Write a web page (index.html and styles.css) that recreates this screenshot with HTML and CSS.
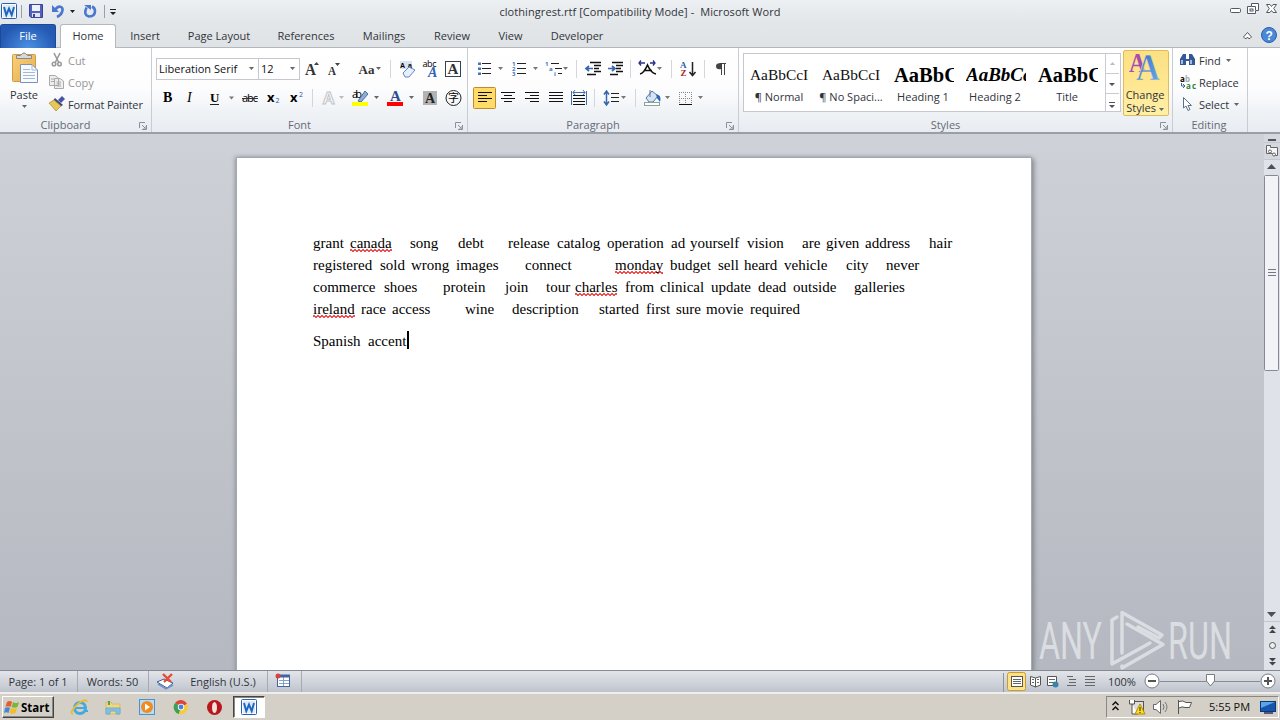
FILE: index.html
```html
<!DOCTYPE html>
<html lang="en">
<head>
<meta charset="utf-8">
<title>clothingrest.rtf - Microsoft Word</title>
<link rel="stylesheet" href="styles.css">
</head>
<body>
<svg width="0" height="0" class="defs">
  <defs>
    <linearGradient id="blue" x1="0" y1="0" x2="1" y2="1"><stop offset="0" stop-color="#2f62c4"/><stop offset="1" stop-color="#6fb2ee"/></linearGradient>
    <linearGradient id="gold" x1="0" y1="0" x2="1" y2="1"><stop offset="0" stop-color="#f9d07c"/><stop offset="1" stop-color="#e6ad4a"/></linearGradient>
    <linearGradient id="purple" x1="0" y1="0" x2="1" y2="1"><stop offset="0" stop-color="#c04aa8"/><stop offset="1" stop-color="#8a4fc0"/></linearGradient>
    <symbol id="word" viewBox="0 0 16 16"><rect x=".5" y=".5" width="15" height="15" rx="1" fill="#fff" stroke="#2b5fae"/><rect x="2" y="2" width="12" height="12" fill="#dcebf9"/><path d="M3 4 5.300 12 8 5.500 10.700 12 13 4" fill="none" stroke="#1f68bd" stroke-width="2"/></symbol>
    <symbol id="down" viewBox="0 0 5 3"><path d="M0 0H5L2.500 3Z" fill="#666"/></symbol>
    <symbol id="launch" viewBox="0 0 8 8"><path d="M.5 6V.5H6M3 3l3 3M7.500 3V7.500H3M7 4v3H4" fill="none" stroke="#8c9199"/></symbol>
  </defs>
</svg>
<div class="window">
  <header class="titlebar">
    <svg class="quick" width="130" height="24" viewBox="0 0 130 24">
      <use href="#word" x="1" y="3" width="16" height="16"/>
      <path d="M21.500 5V18M104.500 5V18" stroke="#9aa0a8"/>
      <path d="M29.500 4.500H42.500V17.500H31L29.500 16Z" fill="#5361b8" stroke="#38449a"/><rect x="32" y="5" width="8" height="6" fill="#eef2ff"/><rect x="32" y="13" width="8" height="4" fill="#dfe3ef"/><rect x="33" y="14" width="2" height="3" fill="#38449a"/>
      <path d="M55 10C59 4 64 7 62 12Q61 15 57 17" fill="none" stroke="#4a77d0" stroke-width="2.600"/><path d="M52 5V12H59Z" fill="#4a77d0"/>
      <path d="M70 10H75L72.500 13ZM110 12H116L113 15Z" fill="#222"/><path d="M110 9.500H116" stroke="#222"/>
      <path d="M86.500 7.500Q83 15 89 16.500Q95 16.500 95 11Q95 8 92 6.500" fill="none" stroke="#4a77d0" stroke-width="2.600"/><path d="M84 5H91V10Z" fill="#4a77d0"/>
    </svg>
    <h1 class="caption">clothingrest.rtf [Compatibility Mode] -&nbsp; Microsoft Word</h1>
    <svg class="controls" width="54" height="24" viewBox="1226 0 54 24" fill="#fff" stroke="#555a62"><rect x="1230.500" y="8.500" width="10" height="4" rx="1"/><path d="M1251.500 3.500H1258.500V10.500H1255.500V13.500H1247.500V6.500H1251.500Z"/><rect x="1250" y="9" width="3" height="2"/><path d="M1251.500 6.500H1255.500V10"/><path d="M1266.500 4.500H1270L1271.500 6.500 1273 4.500H1276.500L1273.700 8.500 1276.500 12.500H1273L1271.500 10.500 1270 12.500H1266.500L1269.300 8.500Z"/></svg>
  </header>

  <nav class="tabs">
    <span class="tab file">File</span><span class="tab home">Home</span><span class="tab">Insert</span><span class="tab">Page Layout</span><span class="tab">References</span><span class="tab">Mailings</span><span class="tab">Review</span><span class="tab">View</span><span class="tab">Developer</span>
    <svg class="help" width="40" height="24" viewBox="1240 24 40 24"><path d="M1243.500 37 1247.500 32.500 1251.500 37 1250 38.500H1248.500L1247.500 37 1246.500 38.500H1245Z" fill="#fff" stroke="#555"/><circle cx="1269" cy="35" r="7.500" fill="#4a88d8" stroke="#2b5ea8"/><text x="1265.500" y="39.500" font-family="Liberation Sans" font-weight="bold" font-size="12" fill="#fff">?</text></svg>
  </nav>

  <section class="ribbon">
    <div class="group clipboard">
      <div class="group-body">
        <div class="paste">
          <svg width="36" height="36" viewBox="6 50 36 36"><rect x="12.500" y="54.500" width="23" height="27" rx="1" fill="url(#gold)" stroke="#d09c48"/><path d="M16.500 58.500V55.500H20.500Q24 50.500 27.500 55.500H31.500V58.500Z" fill="#d5d8dc" stroke="#888"/><path d="M20.500 64.500H32L37.500 70V82.500H20.500Z" fill="#f7fbff" stroke="#7d91b8"/><path d="M32 65V70H37M23 69.500H30M23 72.500H35M23 75.500H35M23 78.500H35" fill="none" stroke="#a5b8da"/></svg>
          <span>Paste</span>
          <svg width="5" height="3"><use href="#down"/></svg>
        </div>
        <ul class="commands clip-list">
          <li class="off"><svg width="18" height="18" viewBox="48 52 18 18"><path d="M54 54 59 64M60 54 55 64" stroke="#999" stroke-width="1.600"/><circle cx="54" cy="65" r="1.800" fill="none" stroke="#999" stroke-width="1.500"/><circle cx="59.500" cy="65" r="1.800" fill="none" stroke="#999" stroke-width="1.500"/></svg>Cut</li>
          <li class="off"><svg width="18" height="18" viewBox="48 74 18 18" fill="#eee" stroke="#aaa"><path d="M49.500 76.500H55L58.500 79V86.500H49.500ZM54.500 79.500H60L63.500 82V89.500H54.500Z"/><path d="M51 80H54M51 82.500H54M56.500 83H61M56.500 85H61M56.500 87H61"/></svg>Copy</li>
          <li class="tight"><svg width="18" height="18" viewBox="48 96 18 18"><path d="M58 101 62 97 65 100 61 104Z" fill="#4656a4"/><path d="M55 99 63 106 60 108 53 102Z" fill="#3c4680"/><path d="M49 104 54 101 61 107 56 112Z" fill="#e7c65a" stroke="#ad8d31" stroke-width=".7"/></svg>Format Painter</li>
        </ul>
      </div>
      <div class="group-title">Clipboard<svg width="8" height="8"><use href="#launch"/></svg></div>
    </div>

    <div class="group font">
      <div class="group-body stack">
        <div class="tool-row">
          <div class="combo face">Liberation Serif<svg width="5" height="3"><use href="#down"/></svg></div>
          <div class="combo size">12<svg width="5" height="3"><use href="#down"/></svg></div>
          <svg width="50" height="24" viewBox="300 57 50 24" class="serif" fill="#333"><text x="305" y="75" font-size="16" textLength="11" lengthAdjust="spacingAndGlyphs">A</text><text x="328" y="75" font-size="12" textLength="8" lengthAdjust="spacingAndGlyphs">A</text><path d="M314 65 316.500 62 319 65ZM335 63H340L337.500 66Z" fill="#345"/></svg>
          <svg width="42" height="24" viewBox="350 57 42 24" class="serif" fill="#333"><path d="M349.500 60V78M390.500 60V78" stroke="#d3d6da"/><text x="358.500" y="74" font-size="13" textLength="16">Aa</text><path d="M376 67H381L378.500 70Z" fill="#666"/></svg>
          <svg width="75" height="24" viewBox="392 57 75 24"><rect x="400" y="61" width="12" height="8" fill="#d8e3f2"/><text x="400" y="68" font-size="7" font-family="Liberation Sans" font-weight="bold" textLength="12">Aa</text><path d="M403 73 409 67 415 70 409 77H405Z" fill="#e4efff" stroke="#6787bb"/><text x="422.500" y="67" font-size="9" textLength="14" font-family="Open Sans">abc</text><text x="428" y="77" font-size="14" font-weight="bold" font-style="italic" font-family="Liberation Serif" fill="#3262b7">A</text><rect x="445.500" y="61.500" width="15" height="15" fill="#fff" stroke="#345"/><text x="447.500" y="74" font-size="15" font-family="Liberation Serif" font-weight="bold" fill="#333" textLength="11">A</text></svg>
        </div>
        <div class="tool-row second">
          <svg width="82" height="24" viewBox="156 86 82 24" class="serif"><text x="163" y="102" font-size="14">B</text><text x="187" y="102" font-size="14" font-weight="normal" font-style="italic">I</text><text x="210" y="102" font-size="13">U</text><path d="M210 104.500H219" stroke="#222"/><path d="M229 96.500H234L231.500 99.500Z" fill="#777"/></svg>
          <svg width="78" height="24" viewBox="238 86 78 24"><text x="242" y="102" font-size="11" textLength="16" font-family="Open Sans">abc</text><path d="M242 98.500H258" stroke="#333"/><text x="267" y="102" font-size="13" font-weight="bold" font-family="Open Sans">x</text><text x="275.500" y="103" font-size="7" font-family="Open Sans" fill="#2b57b0">2</text><text x="290" y="102" font-size="13" font-weight="bold" font-family="Open Sans">x</text><text x="299" y="97" font-size="7" font-family="Open Sans" fill="#2b57b0">2</text><path d="M312.500 89V107" stroke="#d3d6da"/></svg>
          <svg width="68" height="24" viewBox="316 86 68 24"><text x="322.500" y="104" font-size="17" font-family="Liberation Sans" font-weight="bold" fill="#fff" stroke="#c1c3c6">A</text><path d="M339 96H344L341.500 99Z" fill="#bbb"/><text x="352" y="98" font-size="11" textLength="10" font-family="Open Sans">ab</text><path d="M358 101 365 91 368 94 361 102Z" fill="#8dadd7" stroke="#456da3"/><rect x="352" y="102" width="16" height="4" fill="#ff0"/><path d="M374 96H379L376.500 99Z" fill="#666"/></svg>
          <svg width="83" height="24" viewBox="384 86 83 24" class="serif"><text x="390" y="101" font-size="15" fill="#294d90">A</text><rect x="387" y="102" width="16" height="4" fill="#f00"/><path d="M409 96H414L411.500 99Z" fill="#666"/><rect x="423" y="91" width="14" height="14" fill="#b3b3b3"/><text x="425" y="103" font-size="14" fill="#222">A</text><circle cx="453.500" cy="98" r="7.500" fill="none" stroke="#222"/><text x="448" y="102" font-size="11" font-weight="normal" font-family="Noto Sans CJK SC">字</text></svg>
        </div>
      </div>
      <div class="group-title">Font<svg width="8" height="8"><use href="#launch"/></svg></div>
    </div>

    <div class="group paragraph">
      <div class="group-body stack">
        <div class="tool-row">
          <svg width="104" height="24" viewBox="472 57 104 24"><path d="M482 63.500H491M482 68.500H491M482 73.500H491M517 63.500H526M517 68.500H526M517 73.500H526M551 63.500H559M555 68.500H562M558 73.500H562" stroke="#222"/><g fill="#4674b9"><path d="M478 62.500H481V65H478ZM478 67.500H481V70H478ZM478 72.500H481V75H478Z"/><g font-size="6" font-family="Open Sans" font-weight="bold"><text x="512" y="66">1</text><text x="512" y="71">2</text><text x="512" y="76">3</text><text x="545" y="66">1</text><text x="549" y="71">a</text><text x="554" y="76">i</text></g></g><path d="M498 67H503L500.500 70ZM533 67H538L535.500 70ZM563 67H568L565.500 70Z" fill="#777"/></svg>
          <svg width="96" height="24" viewBox="576 57 96 24"><path d="M576.500 60V78M630.500 60V78M671.500 60V78" stroke="#d3d6da"/><path d="M590 62.500H601M594 65.500H601M594 68.500H599M594 71.500H601M587 74.500H596M612 62.500H623M616 65.500H623M616 68.500H621M616 71.500H623M610 74.500H618" stroke="#111" stroke-width="1.600"/><path d="M593 68.500H587M589 66 586 68.500 589 71M608 68.500H614M612 66 615 68.500 612 71" fill="none" stroke="#3667ad" stroke-width="1.700"/><path d="M640 74Q644 73 647.500 65Q651 73 656 74M644 70.500H652" fill="none" stroke="#111" stroke-width="1.700"/><path d="M639 63H645M641 60.500 639 63 641 65.500M650 63H655M653 60.500 655 63 653 65.500" fill="none" stroke="#25318c" stroke-width="1.300"/><path d="M657 67H662L659.500 70Z" fill="#777"/></svg>
          <svg width="66" height="24" viewBox="672 57 66 24"><text x="680" y="68" font-size="9" font-family="Liberation Serif" font-weight="bold" fill="#2c5eaa">A</text><text x="680.500" y="76" font-size="9" font-family="Liberation Serif" font-weight="bold" fill="#a22720">Z</text><path d="M692.500 62V75M689.500 72 692.500 75.500 695.500 72" fill="none" stroke="#222" stroke-width="1.500"/><path d="M704.500 60V78" stroke="#d3d6da"/><path d="M720 63.500H726M721.500 63V75M724.500 63V75" stroke="#444" fill="none"/><path d="M721 63V69Q716 70 716 66Q716 63 721 63" fill="#444"/></svg>
        </div>
        <div class="tool-row second">
          <svg width="124" height="24" viewBox="472 86 124 24"><rect x="473.500" y="87.500" width="22" height="21" rx="1" fill="#ffdb68" stroke="#c28a30"/><path d="M478 92.500H492M478 95.500H487M478 98.500H492M478 101.500H487M501 92.500H515M504 95.500H512M501 98.500H515M504 101.500H512M525 92.500H539M530 95.500H539M525 98.500H539M530 101.500H539M549 92.500H563M549 95.500H563M549 98.500H563M549 101.500H563M573 95.500H585M573 98.500H585M573 101.500H585M573 104.500H585" stroke="#111" stroke-width="1.200"/><path d="M571.500 91V105M586.500 91V105M573 92.500H585M575 90 573 92.500 575 95M583 90 585 92.500 583 95" fill="none" stroke="#3e6eb1"/><path d="M594.500 89V107" stroke="#d3d6da"/></svg>
          <svg width="142" height="24" viewBox="596 86 142 24"><path d="M606.500 92V104M604 94.500 606.500 91 609 94.500M604 101.500 606.500 105 609 101.500" fill="none" stroke="#3667ad" stroke-width="1.500"/><path d="M611 93.500H619M611 97.500H619M611 101.500H619" stroke="#222"/><path d="M621 96H626L623.500 99ZM665 96H670L667.500 99ZM698 96H703L700.500 99Z" fill="#777"/><path d="M635.500 89V107" stroke="#d3d6da"/><path d="M646 98 652 91 658 96 653 102H649Z" fill="#d6e4f4" stroke="#57749c"/><path d="M650 97V90" stroke="#57749c"/><path d="M656 94Q662 95 660 102L657 98Z" fill="#2767b8"/><rect x="644.500" y="102.500" width="15" height="3" fill="#fff" stroke="#8aa39d"/><path d="M679 92.500H692M679 98.500H692M679.500 92V104M685.500 92V104M691.500 92V104" stroke="#888" stroke-dasharray="1 1"/><path d="M679 104.500H692" stroke="#111"/></svg>
        </div>
      </div>
      <div class="group-title">Paragraph<svg width="8" height="8"><use href="#launch"/></svg></div>
    </div>

    <div class="group styles">
      <div class="group-body">
        <div class="gallery">
          <div class="style-card"><b class="sample">AaBbCcI</b><span>¶ Normal</span></div>
          <div class="style-card"><b class="sample">AaBbCcI</b><span>¶ No Spaci...</span></div>
          <div class="style-card"><b class="sample strong">AaBbC</b><span>Heading 1</span></div>
          <div class="style-card"><b class="sample strong italic">AaBbCc</b><span>Heading 2</span></div>
          <div class="style-card"><b class="sample strong">AaBbC</b><span>Title</span></div>
          <svg class="gallery-nav" width="14" height="58" viewBox="0 0 14 58"><path d="M.5 0V58M0 19.500H14M0 39.500H14" stroke="#c8ccd2"/><path d="M5 11H10L7.500 8Z" fill="#bbb"/><path d="M4 29H10L7 32ZM4 51H10L7 54Z" fill="#555"/><path d="M4 48.500H10" stroke="#555"/></svg>
        </div>
        <div class="change-styles">
          <svg width="36" height="32" viewBox="1128 52 36 32"><g font-family="Liberation Serif" font-weight="bold"><text x="1129" y="73" font-size="27" fill="url(#purple)" textLength="17" lengthAdjust="spacingAndGlyphs">A</text><text x="1136" y="81" font-size="37" fill="url(#blue)" stroke="#ffe792" stroke-width=".5" textLength="24" lengthAdjust="spacingAndGlyphs">A</text></g></svg>
          <span>Change</span><span>Styles <svg width="5" height="3"><use href="#down"/></svg></span>
        </div>
      </div>
      <div class="group-title">Styles<svg width="8" height="8"><use href="#launch"/></svg></div>
    </div>

    <div class="group editing">
      <div class="group-body">
        <ul class="commands">
          <li><svg width="18" height="18" viewBox="1179 52 18 18"><path d="M1180 66V60L1183 55H1186V60H1189V55H1192L1195 60V66H1189V62H1186V66Z" fill="#345996"/><path d="M1182 65V61M1191 65V61" stroke="#c9dcf6" stroke-width="1.500"/></svg>Find<svg class="more" width="5" height="3"><use href="#down"/></svg></li>
          <li><svg width="18" height="18" viewBox="1179 74 18 18" font-family="Open Sans" font-weight="bold"><text x="1180" y="83" font-size="8">a</text><text x="1185" y="83" font-size="8" fill="#aaa">b</text><text x="1186" y="90" font-size="8" fill="#31833a" textLength="10">ac</text><path d="M1181.500 84V87H1185M1183 85 1185 87 1183 89" fill="none" stroke="#3863a8"/></svg>Replace</li>
          <li><svg width="18" height="18" viewBox="1179 96 18 18"><path d="M1183.500 98.500V109L1186 107 1188 111.500 1190 110.500 1188 106.500H1191.500Z" fill="#fff" stroke="#5c7189"/></svg>Select<svg class="more" width="5" height="3"><use href="#down"/></svg></li>
        </ul>
      </div>
      <div class="group-title">Editing</div>
    </div>
  </section>

  <main class="workspace">
    <article class="page">
      <p class="line line-a"><span>grant</span><span><u>canada</u></span><span>song</span><span>debt</span><span>release</span><span>catalog</span><span>operation</span><span>ad</span><span>yourself</span><span>vision</span><span>are</span><span>given</span><span>address</span><span>hair</span></p>
      <p class="line line-b"><span>registered</span><span>sold</span><span>wrong</span><span>images</span><span>connect</span><span><u>monday</u></span><span>budget</span><span>sell</span><span>heard</span><span>vehicle</span><span>city</span><span>never</span></p>
      <p class="line line-c"><span>commerce</span><span>shoes</span><span>protein</span><span>join</span><span>tour</span><span><u>charles</u></span><span>from</span><span>clinical</span><span>update</span><span>dead</span><span>outside</span><span>galleries</span></p>
      <p class="line line-d"><span><u>ireland</u></span><span>race</span><span>access</span><span>wine</span><span>description</span><span>started</span><span>first</span><span>sure</span><span>movie</span><span>required</span></p>
      <p class="line line-e"><span>Spanish</span><span>accent</span><i class="caret"></i></p>
    </article>
    <svg class="scrollbar" width="16" height="536" viewBox="1264 134 16 536"><rect x="1264" y="134" width="16" height="536" fill="#dfe2e8"/><rect x="1264" y="134" width="16" height="25" fill="#d5d8de"/><path d="M1268 140H1276" stroke="#555" stroke-width="2"/><path d="M1264 142.500H1280M1264 159.500H1280M1264 621.500H1280" stroke="#c3c7ce"/><path d="M1266.500 145.500H1270.500V147.500H1277.500V155.500H1274.500L1272.500 153.500H1266.500Z" fill="#f5f6f8" stroke="#666"/><circle cx="1270" cy="151.500" r="1.500" fill="#fff" stroke="#666"/><circle cx="1274" cy="154.500" r="1.500" fill="#fff" stroke="#666"/><path d="M1267 169H1276L1271.500 164ZM1267 612H1276L1271.500 617Z" fill="#4c5057"/><rect x="1264.500" y="175.500" width="14" height="195" rx="1" fill="#f1f3f6" stroke="#858a94"/><path d="M1268 269.500H1276M1268 272.500H1276M1268 275.500H1276" stroke="#737983"/><path d="M1269 629 1272.500 625.500 1276 629ZM1269 633 1272.500 629.500 1276 633ZM1269 658H1276L1272.500 661.500ZM1269 662H1276L1272.500 665.500Z" fill="#444"/><circle cx="1272.500" cy="645.500" r="3" fill="#eee" stroke="#555"/></svg>
    <svg class="watermark" width="196" height="66" viewBox="1038 606 196 66"><g fill="#e1e4e7" font-family="Roboto" font-size="52"><text x="1039" y="659" textLength="63" lengthAdjust="spacingAndGlyphs">ANY</text><text x="1168" y="659" textLength="64" lengthAdjust="spacingAndGlyphs">RUN</text></g><g fill="none" stroke="#e1e4e7" stroke-width="3.500" stroke-linejoin="round" stroke-linecap="round"><path d="M1122 653V612.500L1162 635 1159 638 1138 627"/><path d="M1117 617 1112 620V664L1150 643"/><path d="M1127 624 1163 644.500 1122 668 1122 666"/></g></svg>
  </main>

  <footer class="status">
    <span class="cell pages">Page: 1 of 1</span><span class="cell words">Words: 50</span>
    <span class="cell proof"><svg width="18" height="18" viewBox="156 672 18 18"><path d="M157 682 164 679 173 683 167 688Z" fill="#fff" stroke="#315e9e"/><path d="M158 684 166 689 173 685" stroke="#6f93c8" fill="none" stroke-width="1.500"/><path d="M163 674 171 682M172 674 164 682" stroke="#e74b32" stroke-width="2.400"/></svg></span>
    <span class="cell language">English (U.S.)</span>
    <span class="cell macro"><svg width="18" height="18" viewBox="276 672 18 18"><rect x="278.500" y="675.500" width="12" height="11" fill="#fff" stroke="#4266a2"/><path d="M280 680.500H290M280 683.500H290M284.500 677V686" stroke="#86a2d1"/><path d="M281 676H291" stroke="#4266a2" stroke-width="3"/><circle cx="279" cy="676" r="2.500" fill="#d8423a"/></svg></span>
    <svg class="views" width="106" height="24" viewBox="1002 670 106 24"><path d="M1003.500 673V692" stroke="#8d929b"/><rect x="1007.500" y="672.500" width="18" height="18" rx="2" fill="#ffe282" stroke="#c99a35"/><g fill="#fff" stroke="#555"><rect x="1011.500" y="676.500" width="11" height="10"/><path d="M1030.500 676.500 1035.500 678 1040.500 676.500V685L1035.500 687 1030.500 685ZM1035.500 678V687M1047.500 676.500H1056.500V685.500H1047.500Z"/></g><path d="M1013 679.500H1021M1013 681.500H1021M1013 683.500H1021M1032 679.500H1034M1032 682.500H1034M1037 679.500H1039M1037 682.500H1039M1049 679.500H1055M1049 682.500H1055M1067 676.500H1073M1069 679.500H1076M1069 682.500H1076M1067 685.500H1076M1085 676.500H1095M1085 679.500H1095M1085 682.500H1095M1085 685.500H1095" stroke="#666"/><circle cx="1055.500" cy="684.500" r="3" fill="#3883a7"/></svg>
    <span class="zoom">100%</span>
    <svg class="slider" width="140" height="24" viewBox="1140 670 140 24"><path d="M1160 681.500H1260" stroke="#878b93"/><path d="M1210.500 677V686" stroke="#878b93"/><g fill="#fff" stroke="#767b84"><circle cx="1152" cy="681" r="7"/><circle cx="1268" cy="681" r="7"/><path d="M1206.500 674.500H1214.500V681L1210.500 686 1206.500 681Z"/></g><path d="M1148 681H1156M1264 681H1272M1268 677V685" stroke="#555" stroke-width="2"/></svg>
  </footer>

  <footer class="taskbar">
    <button class="start"><svg width="16" height="16" viewBox="0 0 16 16"><path d="M3 3Q6 1 8 3L6.500 8Q4 6.500 1.500 8Z" fill="#e75b29"/><path d="M9 3Q12 5 15 3L13.500 8Q10 9.500 7.500 8Z" fill="#79b63a"/><path d="M1 9Q4 7.500 6 9L4.500 14Q2 12.500 0 14Z" fill="#4388d4"/><path d="M7 9Q10 10.500 13 9L11.500 14Q8 15.500 5.500 14Z" fill="#f2bd28"/></svg>Start</button>
    <svg class="apps" width="179" height="26" viewBox="54 694 179 26">
      <circle cx="80" cy="708" r="5.500" fill="none" stroke="#43a9df" stroke-width="3"/><path d="M76 708H85V711H88" fill="none" stroke="#43a9df" stroke-width="2"/><path d="M73 714Q68 713 79 703Q86 698 87 702" fill="none" stroke="#e7bd35" stroke-width="1.800"/>
      <path d="M106 702H111L112 704H120V714H106Z" fill="#f4d681" stroke="#d9bb66"/><path d="M106 708H120V714H116V711H110V714H106Z" fill="#84bfe1" stroke="#6fb0d2"/><path d="M109 701V705" stroke="#50a35a" stroke-width="2"/>
      <rect x="139.500" y="699.500" width="15" height="15" fill="#b7dcf6" stroke="#4b92ce"/><circle cx="147" cy="707" r="6" fill="#f38a1b"/><path d="M145 703.500 150 707 145 710.500Z" fill="#fff"/>
      <path d="M181 707 175 703A7 7 0 0 1 187 704Z" fill="#e04435"/><path d="M181 707 175 703A7 7 0 0 0 179 714Z" fill="#3ca253"/><path d="M181 707 187 704A7 7 0 0 1 179 714Z" fill="#f7cc38"/><circle cx="181" cy="707" r="3.200" fill="#fff"/><circle cx="181" cy="707" r="2.400" fill="#4384dc"/>
      <circle cx="214.500" cy="707.500" r="7.500" fill="#b9171d"/><ellipse cx="214.500" cy="707.500" rx="2.500" ry="5.500" fill="#f1e4dd"/>
    </svg>
    <span class="active-app"><svg width="16" height="16"><use href="#word"/></svg></span>
    <div class="tray">
      <svg width="94" height="20" viewBox="1107 697 94 20"><path d="M1112.500 705 1115.500 702 1118.500 705M1112.500 710 1115.500 707 1118.500 710" fill="none" stroke="#111" stroke-width="1.500"/><rect x="1132.500" y="701.500" width="11" height="10" fill="#ddd" stroke="#555"/><path d="M1129.500 700V704H1134.500V700M1132 704V714H1138" fill="#fff" stroke="#555"/><path d="M1135 714 1140 704 1145 714Z" fill="#ffdc22" stroke="#b28d00"/><path d="M1140 707V711M1140 712V713" stroke="#222"/><path d="M1153.500 704.500H1156L1160.500 700.500V713.500L1156 709.500H1153.500Z" fill="#fff" stroke="#666"/><path d="M1163 704Q1165 707 1163 710M1165 702Q1169 707 1165 712" fill="none" stroke="#777"/><path d="M1178.500 700V714M1179 701.500Q1183 700 1186 702.500H1191.500L1189.500 707.500H1185Q1182 706 1179 708" fill="#fff" stroke="#555"/></svg>
      <time>5:55 PM</time>
      <svg width="18" height="20" viewBox="1259 697 18 20"><rect x="1260.500" y="701.500" width="15" height="10" fill="#1756ad" stroke="#0b3975"/><path d="M1261 702H1275L1261 708Z" fill="#5ba5eb"/><path d="M1264 713H1273" stroke="#557" stroke-width="2"/></svg>
    </div>
  </footer>
</div>
</body>
</html>
```
FILE: styles.css
```css
* { box-sizing: border-box; }
body { margin: 0; overflow: hidden; }
.defs { position: absolute; }
svg { display: block; flex: none; }
.window { width: 1280px; height: 720px; display: grid; grid-template-rows: 24px 24px 86px 536px 24px 26px; font: 11px "Open Sans", "Noto Sans", sans-serif; color: #30343a; white-space: nowrap; }

.titlebar { display: grid; grid-template-columns: 130px 1fr 54px; background: linear-gradient(#edf0f3, #e2e6e9); }
.caption { margin: 0; padding-right: 76px; text-align: center; font-size: 11px; font-weight: 400; line-height: 24px; letter-spacing: .07px; }

.tabs { display: grid; grid-template-columns: 56px 64px 50px 98px 76px 80px 56px 61px 72px 1fr; background: linear-gradient(#e2e6e9, #dfe3e6); border-bottom: 1px solid #b3b8be; }
.tab { text-align: center; line-height: 23px; }
.file { line-height: 21px; color: #fff; background: radial-gradient(ellipse at 50% 100%, #4b91e2, #2458b3 75%); border: 1px solid #1d4a98; border-bottom: 0; border-radius: 3px 3px 0 0; }
.home { height: 24px; margin: 0 4px; line-height: 22px; background: #fff; border: 1px solid #b3b8be; border-bottom: 0; border-radius: 3px 3px 0 0; }
.help { justify-self: end; }

.ribbon { display: grid; grid-template-columns: 152px 316px 271px 434px 75px 1fr; background: linear-gradient(#fff 0, #fdfdfe 48%, #f0f3f6 75%, #e8ecf1); border-bottom: 2px solid #9a9fa7; }
.group { display: grid; grid-template-rows: 69px 15px; border-right: 1px solid #c8cdd4; }
.group-body { display: flex; min-width: 0; }
.stack { flex-direction: column; padding: 9px 0 0 4px; }
.group-title { display: grid; grid-template-columns: 1fr 20px; text-align: center; line-height: 15px; color: #656b74; }
.group-title svg { align-self: center; justify-self: center; margin: 2px 0 0 3px; }
.editing .group-title { grid-template-columns: 1fr; padding-right: 2px; }
.paste { width: 48px; display: flex; flex-direction: column; align-items: center; padding-top: 2px; line-height: 17px; }
.paste svg + span { margin-bottom: 2px; }
.commands { list-style: none; margin: 0; padding: 1px 0 0 6px; }
.clip-list { padding-left: 0; }
.commands li { display: flex; align-items: center; height: 22px; gap: 2px; letter-spacing: -.05px; }
.commands .tight { letter-spacing: -.14px; }
.commands .more { margin-left: 3px; }
.off { color: #969696; }
.tool-row { display: flex; height: 29px; }
.second { height: 24px; }
.combo { display: flex; align-items: center; justify-content: space-between; height: 22px; margin-top: 1px; border: 1px solid #c5c9cf; background: #fff; padding: 0 4px 1px 2px; color: #111; }
.face { width: 102px; border-right: 0; }
.size { width: 42px; }
.serif { font-family: "Liberation Serif", serif; font-weight: bold; }

.gallery { width: 378px; height: 59px; margin: 5px 0 0 4px; border: 1px solid #c5c9cf; background: #fff; display: grid; grid-template-columns: repeat(5, 72px) 16px; }
.style-card { padding: 8px 5px 0 3px; text-align: center; line-height: 20px; overflow: hidden; }
.sample { display: block; height: 25px; font: 15.4px/26px "Liberation Serif", serif; color: #111; overflow: hidden; margin-left: 3px; text-align: left; }
.strong { font-size: 20.5px; font-weight: bold; color: #000; width: 60px; }
.italic { font-style: italic; font-size: 19px; }
.gallery-nav { margin-left: 1px; }
.change-styles { width: 46px; height: 66px; margin: 2px 0 0 2px; border: 1px solid #e0bb57; border-radius: 2px; background: linear-gradient(#fbe184, #ffe792 55%, #fff0a8); display: flex; flex-direction: column; align-items: center; line-height: 13px; }
.change-styles > svg { margin-bottom: 5px; }
.change-styles span { padding-right: 2px; }
.change-styles span svg { display: inline-block; vertical-align: middle; }

.workspace { position: relative; display: grid; grid-template-columns: 1fr 16px; overflow: hidden; background: linear-gradient(#ced1d7, #b5b8c0); }
.page { width: 796px; height: 530px; margin: 23px 0 0 236px; border: 1px solid #a4a8af; background: #fff; box-shadow: 2px 2px 5px #858991, -1px 0 4px #9a9ea6; padding: 74px 0 0 76px; }
.line { margin: 0; display: grid; height: 22px; font: 15px/22px "Liberation Serif", serif; color: #000; }
.line u { display: inline-block; height: 20px; text-decoration: none; background: linear-gradient(45deg, transparent 40%, #ee5050 40% 65%, transparent 65%) 0 100% / 4px 3px repeat-x, linear-gradient(-45deg, transparent 40%, #ee5050 40% 65%, transparent 65%) 2px 100% / 4px 3px repeat-x; }
.line-a { grid-template-columns: 37px 60px 48px 50px 49px 50px 64px 19px 57px 55px 24px 39px 64px 40px; }
.line-b { grid-template-columns: 67px 31px 45px 69px 90px 55px 48px 26px 40px 62px 40px 50px; }
.line-c { grid-template-columns: 71px 59px 62px 41px 29px 50px 35px 51px 47px 35px 61px 60px; }
.line-d { grid-template-columns: 48px 31px 73px 47px 87px 47px 30px 30px 44px 60px; }
.line-e { grid-template-columns: 55px 39px 2px; margin-top: 10px; }
.caret { height: 18px; background: #000; margin-top: 1px; width: 2px; }
.scrollbar { grid-column: 2; }
.page, .scrollbar { grid-row: 1; }
.watermark { position: absolute; left: 1038px; top: 472px; opacity: .85; }

.status { display: flex; line-height: 21px; background: linear-gradient(#e2e5e9, #cfd3da 55%, #bfc4cc); border-top: 1px solid #858a92; border-bottom: 2px solid #eee; }
.cell { border-right: 1px solid #a5aab3; display: flex; align-items: center; justify-content: center; padding-right: 1px; }
.pages { width: 78px; }
.words { width: 71px; }
.proof { width: 33px; border: 0; }
.language { width: 85px; border: 0; padding-right: 3px; }
.macro { width: 35px; border-left: 1px solid #a5aab3; }
.status svg { margin-top: -1px; }
.views { margin-left: auto; }
.zoom { width: 32px; }

.taskbar { display: flex; background: #d4d0c8; }
.start { width: 52px; height: 22px; margin: 2px 0 0 2px; padding: 0 1px; display: flex; align-items: center; gap: 1px; background: #d4d0c8; border: 1px solid; border-color: #fff #444 #444 #fff; box-shadow: inset -1px -1px #888; font: bold 11.5px "Open Sans", sans-serif; color: #000; }
.active-app { width: 32px; height: 22px; margin-top: 2px; display: grid; place-items: center; background: #fff; border: 1px solid; border-color: #444 #fff #fff #444; box-shadow: inset 1px 1px #888; }
.tray { width: 173px; height: 22px; margin: 2px 1px 0 auto; display: flex; border: 1px solid; border-color: #888 #fff #fff #888; color: #111; line-height: 20px; }
.tray time { width: 58px; padding-left: 8px; }
```
